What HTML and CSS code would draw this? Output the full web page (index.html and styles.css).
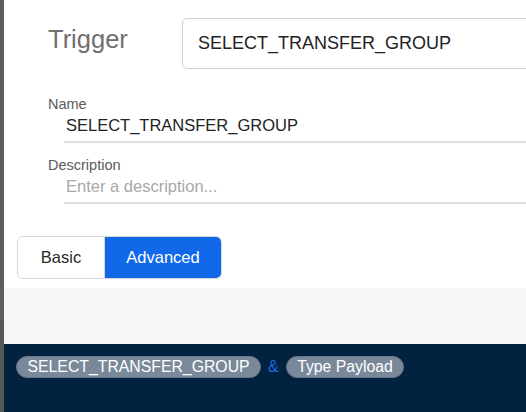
FILE: index.html
```html
<!DOCTYPE html>
<html lang="en">
<head>
  <meta charset="UTF-8">
  <meta name="viewport" content="width=device-width, initial-scale=1.0">
  <title>Trigger</title>
  <link rel="stylesheet" href="styles.css">
</head>
<body>
  <div class="edge">
    <div class="edge-top"></div>
    <div class="edge-bottom"></div>
  </div>
  <div class="main">
    <div class="form">
      <div class="trigger-row">
        <span class="trigger-label">Trigger</span>
        <div class="trigger-input">SELECT_TRANSFER_GROUP</div>
      </div>
      <div class="field">
        <label class="field-label">Name</label>
        <div class="field-value">SELECT_TRANSFER_GROUP</div>
      </div>
      <div class="field">
        <label class="field-label">Description</label>
        <div class="field-value placeholder">Enter a description...</div>
      </div>
      <div class="toggle">
        <button class="toggle-btn basic">Basic</button>
        <button class="toggle-btn advanced active">Advanced</button>
      </div>
    </div>
    <div class="tray"></div>
    <div class="footer">
      <span class="chip">SELECT_TRANSFER_GROUP</span>
      <span class="amp">&amp;</span>
      <span class="chip">Type Payload</span>
    </div>
  </div>
</body>
</html>
```

FILE: styles.css
```css
body {
  margin: 0;
  height: 412px;
  overflow: hidden;
  display: flex;
  font-family: "Liberation Sans", Arial, sans-serif;
  background-color: #fff;
}
.edge {
  width: 4px;
  display: flex;
  flex-direction: column;
}
.edge-top {
  height: 320px;
  background-color: #5d5d5d;
}
.edge-bottom {
  flex: 1;
  background-color: #575757;
}
.main {
  flex: 1;
  display: flex;
  flex-direction: column;
  min-width: 0;
}
.form {
  height: 288px;
  box-sizing: border-box;
  padding: 18px 0 0 44px;
}
.trigger-row {
  display: flex;
  align-items: flex-start;
}
.trigger-label {
  width: 134px;
  font-size: 25.5px;
  color: #707070;
  line-height: 42px;
}
.trigger-input {
  flex: 1;
  height: 51px;
  box-sizing: border-box;
  margin-right: -20px;
  border: 1px solid #cfcfcf;
  border-radius: 5px;
  padding: 0 15px;
  font-size: 18px;
  line-height: 49px;
  color: #222;
}
.field {
  margin-top: 27px;
}
.field + .field {
  margin-top: 14px;
}
.field-label {
  display: block;
  font-size: 14.5px;
  color: #5a5a5a;
}
.field-value {
  margin: 2px 0 0 16px;
  padding: 2px 0 6px 2px;
  font-size: 16.5px;
  color: #222;
  border-bottom: 2px solid #dedede;
}
.placeholder {
  color: #a8a8a8;
}
.toggle {
  display: inline-flex;
  margin: 32px 0 0 -31px;
  border: 1px solid #d8d8d8;
  border-radius: 6px;
  overflow: hidden;
}
.toggle-btn {
  border: none;
  margin: 0;
  padding: 0;
  font-family: inherit;
  font-size: 16.5px;
  height: 41px;
  background-color: #fff;
  color: #2a2a2a;
}
.basic {
  width: 86px;
}
.advanced {
  width: 117px;
  border-left: 1px solid #d8d8d8;
}
.toggle-btn.active {
  background-color: #1169e9;
  color: #fff;
}
.tray {
  height: 56px;
  background-color: #f7f7f7;
}
.footer {
  flex: 1;
  background-color: #02223f;
  padding: 12px 12px 0 12px;
  display: flex;
  align-items: flex-start;
  gap: 7px;
}
.chip {
  display: inline-block;
  height: 22px;
  box-sizing: border-box;
  padding: 0 10.5px;
  border: 1px solid #677689;
  border-radius: 11px;
  background-color: #7a899a;
  color: #fff;
  font-size: 15.8px;
  line-height: 20px;
}
.amp {
  color: #1a6ae4;
  font-size: 15.8px;
  line-height: 22px;
}
```
